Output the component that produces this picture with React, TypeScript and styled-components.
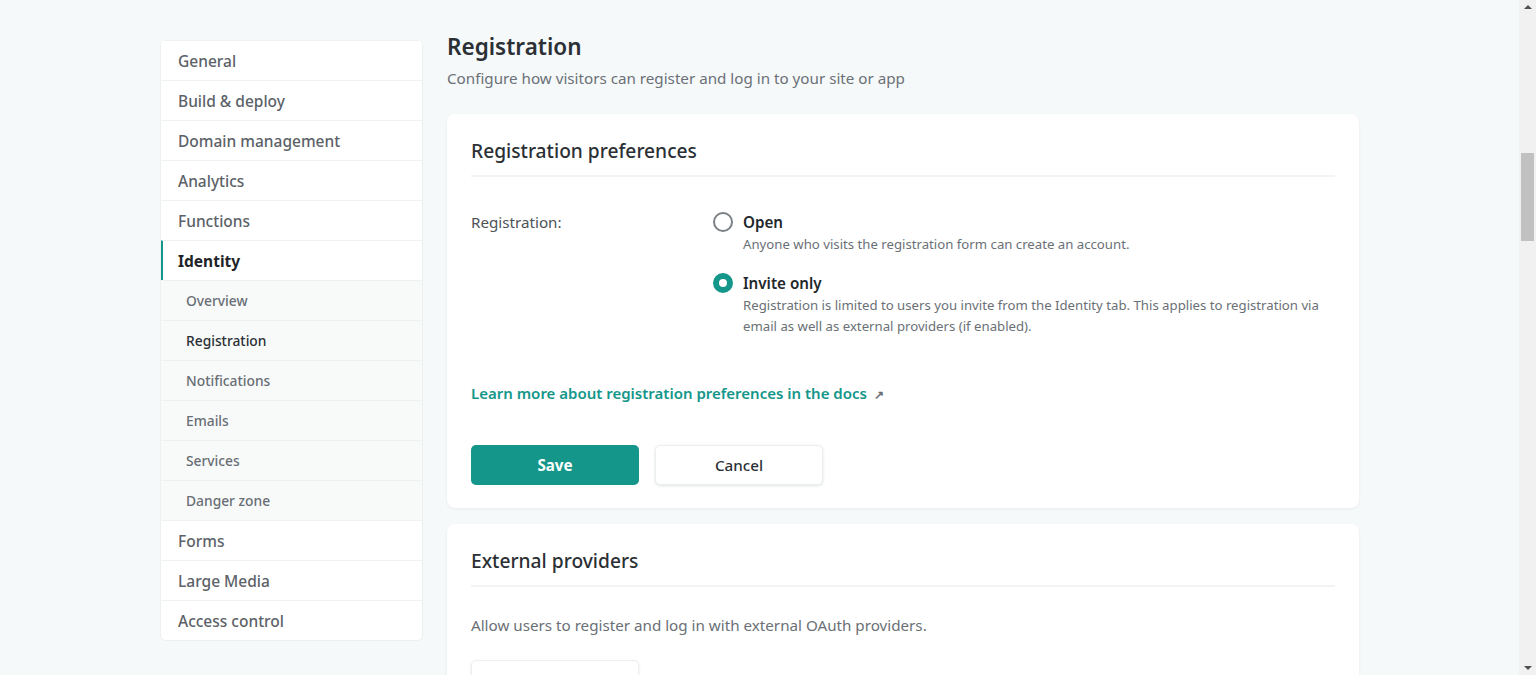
import React, { useState } from 'react';
import styled, { createGlobalStyle } from 'styled-components';

const GlobalStyle = createGlobalStyle`
  html, body {
    margin: 0;
    padding: 0;
    height: 100%;
    overflow: hidden;
  }
  body {
    background: #f6f9fa;
    font-family: "Noto Sans", "Open Sans", "Liberation Sans", sans-serif;
    color: #2e3338;
  }
  * { box-sizing: border-box; }
`;

const teal = '#14968a';

const Shell = styled.div`
  display: flex;
  height: 100vh;
  width: 100%;
`;

const Viewport = styled.div`
  flex: 1;
  overflow: hidden;
`;

const Scrollbar = styled.div`
  width: 17px;
  background: #f1f1f1;
  display: flex;
  flex-direction: column;
  align-items: center;
`;

const ScrollArrow = styled.div<{ $down?: boolean }>`
  width: 0;
  height: 0;
  margin: 5px 0;
  border-left: 4px solid transparent;
  border-right: 4px solid transparent;
  ${(p) => (p.$down ? 'border-top: 4px solid #505050;' : 'border-bottom: 4px solid #505050;')}
`;

const ScrollTrack = styled.div`
  flex: 1;
  width: 100%;
  padding: 139px 2px 0;
`;

const ScrollThumb = styled.div`
  height: 88px;
  background: #c1c1c1;
`;

const Page = styled.div`
  display: flex;
  gap: 24px;
  padding: 40px 0 0 160px;
`;

const Sidebar = styled.nav`
  width: 263px;
  flex-shrink: 0;
  background: #fff;
  border: 1px solid #edf0f1;
  border-top: none;
  border-radius: 6px;
  overflow: hidden;
  align-self: flex-start;
`;

const NavItem = styled.div<{ $sub?: boolean; $active?: boolean; $current?: boolean }>`
  height: 40px;
  display: flex;
  align-items: center;
  padding-left: ${(p) => (p.$sub ? '23px' : '15px')};
  background: ${(p) => (p.$sub ? '#f8fafa' : '#fff')};
  border-top: 1px solid #eef1f2;
  border-left: 3px solid ${(p) => (p.$active ? teal : 'transparent')};
  margin-left: -1px;
  font-size: ${(p) => (p.$sub ? '13.8px' : '15.5px')};
  font-weight: ${(p) => (p.$active ? 700 : 500)};
  color: ${(p) => (p.$active ? '#1f2429' : p.$current ? '#2a2f34' : p.$sub ? '#686e74' : '#5c6268')};
`;

const Main = styled.main`
  width: 912px;
  flex-shrink: 0;
`;

const Title = styled.h1`
  margin: -9px 0 0;
  font-size: 22.5px;
  font-weight: 600;
  line-height: 32px;
  color: #2b3035;
`;

const Subtitle = styled.p`
  margin: 4px 0 0;
  font-size: 15.2px;
  line-height: 22px;
  color: #6a7076;
`;

const Card = styled.section`
  background: #fff;
  border-radius: 8px;
  box-shadow: 0 1px 3px rgba(14, 30, 37, 0.06);
  padding: 24px 24px 23px;
  margin-top: 16px;
  &:first-of-type { margin-top: 25px; }
`;

const CardTitle = styled.h2`
  margin: 0;
  font-size: 19.2px;
  font-weight: 500;
  line-height: 26px;
  padding-bottom: 11px;
  border-bottom: 2px solid #f1f3f4;
  color: #2b3035;
`;

const FieldRow = styled.div`
  display: grid;
  grid-template-columns: 242px 1fr;
  margin-top: 33px;
`;

const FieldLabel = styled.div`
  font-size: 15.2px;
  line-height: 24px;
  color: #4d5358;
`;

const Options = styled.div`
  display: flex;
  flex-direction: column;
  gap: 16px;
`;

const Option = styled.label`
  display: grid;
  grid-template-columns: 30px 1fr;
  cursor: pointer;
`;

const Radio = styled.span<{ $checked?: boolean }>`
  width: 20px;
  height: 20px;
  margin-top: 2px;
  border-radius: 50%;
  border: ${(p) => (p.$checked ? `6px solid ${teal}` : '2px solid #7b8085')};
  background: #fff;
`;

const OptionTitle = styled.div`
  font-size: 15.2px;
  font-weight: 600;
  line-height: 24px;
  color: #22272b;
`;

const OptionDesc = styled.div`
  font-size: 13.2px;
  line-height: 21px;
  color: #6a7076;
  max-width: 592px;
`;

const DocsLink = styled.a`
  display: inline-block;
  margin-top: 44px;
  font-size: 15px;
  font-weight: 600;
  line-height: 24px;
  color: ${teal};
  text-decoration: none;
`;

const Arrow = styled.span`
  font-size: 12px;
  margin-left: 7px;
  color: #6a7076;
`;

const Actions = styled.div`
  display: flex;
  gap: 16px;
  margin-top: 38px;
`;

const Button = styled.button<{ $primary?: boolean }>`
  width: 168px;
  height: 40px;
  border-radius: 5px;
  font-family: inherit;
  font-size: 15.2px;
  font-weight: ${(p) => (p.$primary ? 700 : 500)};
  cursor: pointer;
  border: ${(p) => (p.$primary ? 'none' : '1px solid #eceff0')};
  background: ${(p) => (p.$primary ? teal : '#fff')};
  color: ${(p) => (p.$primary ? '#fff' : '#2b3035')};
  box-shadow: ${(p) => (p.$primary ? 'none' : '0 1px 3px rgba(14, 30, 37, 0.12)')};
`;

const CardText = styled.p`
  margin: 26px 0 0;
  font-size: 15.2px;
  line-height: 24px;
  color: #6a7076;
`;

const GhostButton = styled.div`
  margin-top: 23px;
  width: 168px;
  height: 40px;
  border: 1px solid #eceff0;
  border-radius: 5px;
  box-shadow: 0 1px 3px rgba(14, 30, 37, 0.1);
`;

const nav = [
  { label: 'General' },
  { label: 'Build & deploy' },
  { label: 'Domain management' },
  { label: 'Analytics' },
  { label: 'Functions' },
  { label: 'Identity', active: true },
  { label: 'Overview', sub: true },
  { label: 'Registration', sub: true, current: true },
  { label: 'Notifications', sub: true },
  { label: 'Emails', sub: true },
  { label: 'Services', sub: true },
  { label: 'Danger zone', sub: true },
  { label: 'Forms' },
  { label: 'Large Media' },
  { label: 'Access control' },
];

const App: React.FC = () => {
  const [mode, setMode] = useState<'open' | 'invite'>('invite');

  return (
    <>
      <GlobalStyle />
      <Shell>
        <Viewport>
          <Page>
            <Sidebar>
              {nav.map((item) => (
                <NavItem key={item.label} $sub={item.sub} $active={item.active} $current={item.current}>
                  {item.label}
                </NavItem>
              ))}
            </Sidebar>
            <Main>
              <Title>Registration</Title>
              <Subtitle>Configure how visitors can register and log in to your site or app</Subtitle>

              <Card>
                <CardTitle>Registration preferences</CardTitle>
                <FieldRow>
                  <FieldLabel>Registration:</FieldLabel>
                  <Options>
                    <Option onClick={() => setMode('open')}>
                      <Radio $checked={mode === 'open'} />
                      <div>
                        <OptionTitle>Open</OptionTitle>
                        <OptionDesc>Anyone who visits the registration form can create an account.</OptionDesc>
                      </div>
                    </Option>
                    <Option onClick={() => setMode('invite')}>
                      <Radio $checked={mode === 'invite'} />
                      <div>
                        <OptionTitle>Invite only</OptionTitle>
                        <OptionDesc>
                          Registration is limited to users you invite from the Identity tab. This applies to registration via
                          email as well as external providers (if enabled).
                        </OptionDesc>
                      </div>
                    </Option>
                  </Options>
                </FieldRow>
                <DocsLink href="#">
                  Learn more about registration preferences in the docs<Arrow>↗</Arrow>
                </DocsLink>
                <Actions>
                  <Button $primary>Save</Button>
                  <Button>Cancel</Button>
                </Actions>
              </Card>

              <Card>
                <CardTitle>External providers</CardTitle>
                <CardText>Allow users to register and log in with external OAuth providers.</CardText>
                <GhostButton />
              </Card>
            </Main>
          </Page>
        </Viewport>
        <Scrollbar>
          <ScrollArrow />
          <ScrollTrack>
            <ScrollThumb />
          </ScrollTrack>
          <ScrollArrow $down />
        </Scrollbar>
      </Shell>
    </>
  );
};

export default App;
